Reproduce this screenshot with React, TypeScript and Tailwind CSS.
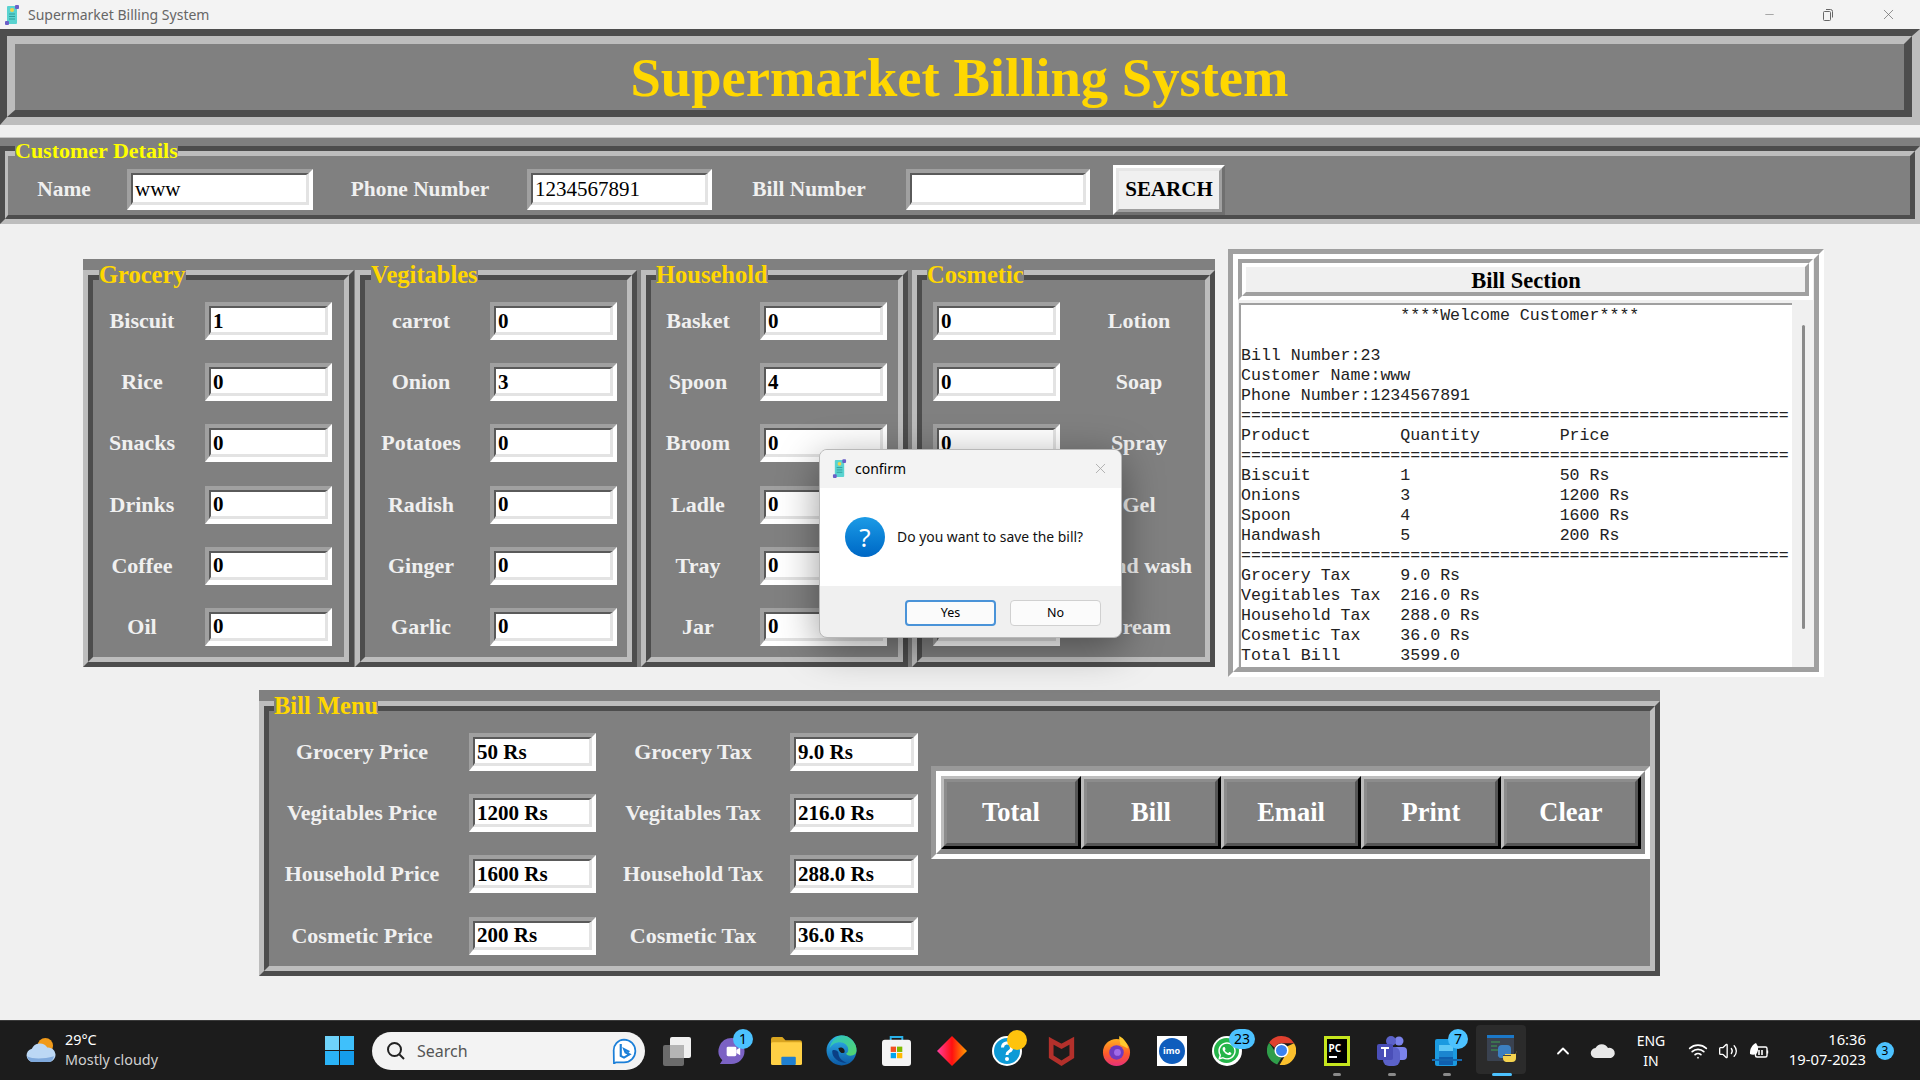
import React from "react";
import { ChevronUp, Wifi, Volume2, X, Minus } from "lucide-react";
import { FaWhatsapp } from "react-icons/fa";

const serif = "font-['Liberation_Serif',serif]";
const ui = "font-['Noto_Sans',sans-serif]";

const Sunken = ({ w, h, value, bold = true }: { w: string; h: string; value?: string; bold?: boolean }) => (
  <div className={`${w} ${h} shrink-0 border-t-[4px] border-l-[4px] border-b-[5px] border-r-[4px] border-t-[#a0a0a0] border-l-[#a0a0a0] border-b-white border-r-white`}>
    <div className={`h-full border-t-[2px] border-l-[2px] border-b-[3px] border-r-[3px] border-t-[#5a5a5a] border-l-[#5a5a5a] border-b-[#e3e3e3] border-r-[#e3e3e3] bg-white flex items-center pt-[2px] text-black text-[21px] leading-none ${serif} ${bold ? "pl-[2px] font-bold" : "pl-[2px] font-normal"}`}>
      {value}
    </div>
  </div>
);

const LabelText = ({ className, children }: { className: string; children: React.ReactNode }) => (
  <div className={`${className} shrink-0 text-center whitespace-nowrap leading-none font-bold text-[#f0f0f0] ${serif}`}>{children}</div>
);

type Col = { title: string; titleLeft: string; outer: string; items: [string, string][]; labelW: string; gap: string };

const RidgeTitle = ({ left, children }: { left: string; children: React.ReactNode }) => (
  <div className={`absolute ${left} top-[2px] bg-[#808080] text-[#ffd700] text-[24.5px] leading-[28px] font-bold whitespace-nowrap ${serif}`}>{children}</div>
);

const Ridge = ({ className, children }: { className: string; children: React.ReactNode }) => (
  <div className={`${className} border-[5px] border-t-[#bdbdbd] border-l-[#bdbdbd] border-b-[#4d4d4d] border-r-[#4d4d4d]`}>
    <div className="h-full border-[5px] border-t-[#4d4d4d] border-l-[#4d4d4d] border-b-[#bdbdbd] border-r-[#bdbdbd]">{children}</div>
  </div>
);

const columns: Col[] = [
  { title: "Grocery", titleLeft: "left-[16px]", outer: "w-[271px]", labelW: "w-[98px]", gap: "ml-[14px]", items: [["Biscuit", "1"], ["Rice", "0"], ["Snacks", "0"], ["Drinks", "0"], ["Coffee", "0"], ["Oil", "0"]] },
  { title: "Vegitables", titleLeft: "left-[16px]", outer: "w-[282px] ml-[1px]", labelW: "w-[112px]", gap: "ml-[13px]", items: [["carrot", "0"], ["Onion", "3"], ["Potatoes", "0"], ["Radish", "0"], ["Ginger", "0"], ["Garlic", "0"]] },
  { title: "Household", titleLeft: "left-[15px]", outer: "w-[267px] ml-[4px]", labelW: "w-[94px]", gap: "ml-[15px]", items: [["Basket", "0"], ["Spoon", "4"], ["Broom", "0"], ["Ladle", "0"], ["Tray", "0"], ["Jar", "0"]] },
];
const cosmetic: [string, string][] = [["Lotion", "0"], ["Soap", "0"], ["Spray", "0"], ["Gel", "0"], ["Hand wash", "5"], ["Cream", "0"]];

const billLines = [
  "                ****Welcome Customer****",
  " ",
  "Bill Number:23",
  "Customer Name:www",
  "Phone Number:1234567891",
  "=======================================================",
  "Product         Quantity        Price",
  "=======================================================",
  "Biscuit         1               50 Rs",
  "Onions          3               1200 Rs",
  "Spoon           4               1600 Rs",
  "Handwash        5               200 Rs",
  "=======================================================",
  "Grocery Tax     9.0 Rs",
  "Vegitables Tax  216.0 Rs",
  "Household Tax   288.0 Rs",
  "Cosmetic Tax    36.0 Rs",
  "Total Bill      3599.0",
];

const menuRows = [
  ["Grocery Price", "50 Rs", "Grocery Tax", "9.0 Rs"],
  ["Vegitables Price", "1200 Rs", "Vegitables Tax", "216.0 Rs"],
  ["Household Price", "1600 Rs", "Household Tax", "288.0 Rs"],
  ["Cosmetic Price", "200 Rs", "Cosmetic Tax", "36.0 Rs"],
];

const ScrollIcon = ({ className }: { className: string }) => (
  <svg viewBox="0 0 16 20" className={className}>
    <rect x="3" y="1" width="10" height="18" rx="1" fill="#5ad3d0" />
    <rect x="11" y="0" width="4" height="4" rx="1" fill="#6b5fc7" />
    <rect x="1" y="16" width="4" height="4" rx="1" fill="#6b5fc7" />
    <circle cx="8" cy="5" r="2" fill="#f2d14b" />
    <path d="M5 9h6M5 11.5h6M5 14h6" stroke="#2f9e9b" strokeWidth="1" />
  </svg>
);

const Badge = ({ children, className }: { children?: React.ReactNode; className: string }) => (
  <div className={`absolute flex items-center justify-center rounded-full text-[14px] leading-none text-black ${ui} ${className}`}>{children}</div>
);

const Dash = ({ blue = false }: { blue?: boolean }) => (
  <div className={`absolute bottom-[5px] left-1/2 -translate-x-1/2 h-[3px] rounded-full ${blue ? "w-[20px] bg-[#4cc2ff]" : "w-[8px] bg-[#8a8a8a]"}`} />
);

const Slot = ({ children }: { children: React.ReactNode }) => (
  <div className="relative w-[55px] h-[60px] shrink-0 flex items-center justify-center">{children}</div>
);

export default function App() {
  return (
    <div className="relative w-[1920px] h-[1080px] overflow-hidden bg-[#f0f0f0] flex flex-col">
      {/* window title bar */}
      <div className="h-[29px] shrink-0 bg-[#f3f3f3] flex items-center pl-[4px]">
        <ScrollIcon className="w-[16px] h-[20px]" />
        <div className={`ml-[8px] text-[14px] text-[#666666] ${ui}`}>Supermarket Billing System</div>
        <div className="ml-auto flex items-center text-[#666666]">
          <Minus className="w-[13px] h-[13px] mr-[46px]" strokeWidth={1} />
          <svg viewBox="0 0 12 14" className="w-[12px] h-[14px] mr-[46px]" fill="none" stroke="#666666" strokeWidth="1">
            <rect x="1.5" y="3.5" width="7" height="9" rx="1" />
            <path d="M4 1.5h4.5a2 2 0 0 1 2 2v6" />
          </svg>
          <X className="w-[17px] h-[17px] mr-[23px]" strokeWidth={1} />
        </div>
      </div>

      {/* heading */}
      <div className="h-[96px] shrink-0 border-t-[7px] border-l-[7px] border-b-[8px] border-r-[8px] border-t-[#4d4d4d] border-l-[#4d4d4d] border-b-[#bdbdbd] border-r-[#bdbdbd]">
        <div className="h-full bg-[#808080] border-t-[8px] border-l-[8px] border-b-[7px] border-r-[8px] border-t-[#bdbdbd] border-l-[#bdbdbd] border-b-[#4d4d4d] border-r-[#4d4d4d] flex items-center justify-center pt-[2px]">
          <div className={`text-[54.6px] leading-none font-bold text-[#ffd700] whitespace-nowrap ${serif}`}>Supermarket Billing System</div>
        </div>
      </div>

      {/* customer details */}
      <div className="relative mt-[12px] h-[87px] shrink-0 bg-[#808080] border-t border-[#c4c4c4] pt-[8px]">
        <div className="h-[78px] border-[5px] border-b-[5px] border-t-[#4d4d4d] border-l-[#4d4d4d] border-b-[#bdbdbd] border-r-[#bdbdbd]">
          <div className="h-full border-t-[5px] border-l-[3px] border-b-[4px] border-r-[5px] border-t-[#bdbdbd] border-l-[#bdbdbd] border-b-[#4d4d4d] border-r-[#4d4d4d] flex items-center pt-[8px] text-[21.4px]">
            <LabelText className="w-[112px]">Name</LabelText>
            <div className="ml-[7px]"><Sunken w="w-[186px]" h="h-[41px]" value="www" bold={false} /></div>
            <LabelText className="w-[214px]">Phone Number</LabelText>
            <Sunken w="w-[185px]" h="h-[41px]" value="1234567891" bold={false} />
            <LabelText className="w-[194px]">Bill Number</LabelText>
            <Sunken w="w-[184px]" h="h-[41px]" />
            <button className={`ml-[23px] w-[112px] h-[50px] shrink-0 border-[3px] border-t-white border-l-white border-b-[#6f6f6f] border-r-[#6f6f6f] text-[21px] leading-none font-bold text-black ${serif}`}>
              <span className="flex h-full items-center justify-center border-[3px] border-t-[#e6e6e6] border-l-[#e6e6e6] border-b-[#a0a0a0] border-r-[#a0a0a0] bg-[#f0f0f0]">SEARCH</span>
            </button>
          </div>
        </div>
        <div className={`absolute left-[15px] top-[0px] bg-[#808080] text-[#ffff00] text-[22px] leading-[26px] font-bold whitespace-nowrap ${serif}`}>Customer Details</div>
      </div>

      {/* products + bill */}
      <div className="mt-[25px] flex items-start pl-[83px] shrink-0">
        <div className="mt-[10px] w-[1132px] h-[408px] shrink-0 bg-[#808080] flex">
          {columns.map((c) => (
            <div key={c.title} className={`relative ${c.outer} shrink-0 pt-[11px]`}>
              <Ridge className="h-full">
                <div className="flex flex-col gap-[23.2px] pt-[22px] text-[22px]">
                  {c.items.map(([l, v]) => (
                    <div key={l} className="flex items-center">
                      <LabelText className={c.labelW}>{l}</LabelText>
                      <div className={c.gap}><Sunken w="w-[127px]" h="h-[38px]" value={v} /></div>
                    </div>
                  ))}
                </div>
              </Ridge>
              <RidgeTitle left={c.titleLeft}>{c.title}</RidgeTitle>
            </div>
          ))}
          <div className="relative w-[303px] ml-[4px] shrink-0 pt-[11px]">
            <Ridge className="h-full">
              <div className="flex flex-col gap-[23.2px] pt-[22px] text-[22px]">
                {cosmetic.map(([l, v]) => (
                  <div key={l} className="flex items-center">
                    <div className="ml-[11px]"><Sunken w="w-[127px]" h="h-[38px]" value={v} /></div>
                    <LabelText className="ml-[8px] w-[142px]">{l}</LabelText>
                  </div>
                ))}
              </div>
            </Ridge>
            <RidgeTitle left="left-[15px]">Cosmetic</RidgeTitle>
          </div>
        </div>

        {/* bill section */}
        <div className="ml-[13px] w-[596px] h-[428px] shrink-0 border-[5px] border-t-[#a0a0a0] border-l-[#a0a0a0] border-b-white border-r-white">
          <div className="h-full border-[5px] border-t-white border-l-white border-b-[#a0a0a0] border-r-[#a0a0a0] flex flex-col">
            <div className="h-[41px] w-[575px] shrink-0 border-[4px] border-t-[#a0a0a0] border-l-[#a0a0a0] border-b-white border-r-white">
              <div className={`h-full border-[4px] border-t-white border-l-white border-b-[#a0a0a0] border-r-[#a0a0a0] bg-[#f0f0f0] flex items-center justify-center pt-[3px] pl-[1px] text-[22.5px] leading-none font-bold text-black ${serif}`}>Bill Section</div>
            </div>
            <div className="mt-[3px] flex-1 min-h-0 flex pl-[1px]">
              <div className="w-[553px] h-full overflow-hidden bg-white border-t-2 border-l-2 border-[#a0a0a0] pt-[1px] font-['Liberation_Mono',monospace] text-[16.6px] leading-[20px] text-[#222222]">
                {billLines.map((l, i) => (
                  <div key={i} className="whitespace-pre h-[20px]">{l}</div>
                ))}
              </div>
              <div className="flex-1 relative bg-[#f0f0f0]">
                <div className="absolute left-[10px] top-[22px] w-[3px] h-[304px] rounded-full bg-[#8a8a8a]" />
              </div>
            </div>
          </div>
        </div>
      </div>

      {/* bill menu */}
      <div className="relative mt-[13px] ml-[259px] w-[1401px] h-[286px] shrink-0 bg-[#808080] pt-[11px]">
        <Ridge className="h-full">
          <div className="flex items-start">
            <div className="flex flex-col gap-[23.2px] pt-[22px] text-[22px]">
              {menuRows.map((r) => (
                <div key={r[0]} className="flex items-center">
                  <LabelText className="w-[186px]">{r[0]}</LabelText>
                  <div className="ml-[14px]"><Sunken w="w-[127px]" h="h-[38px]" value={r[1]} /></div>
                  <LabelText className="w-[194px]">{r[2]}</LabelText>
                  <Sunken w="w-[128px]" h="h-[38px]" value={r[3]} />
                </div>
              ))}
            </div>
            <div className="ml-[13px] mt-[55px] w-[719px] h-[93px] shrink-0 border-[5px] border-t-[#999999] border-l-[#999999] border-b-white border-r-white">
              <div className="h-full border-[5px] border-t-white border-l-white border-b-[#8a8a8a] border-r-[#8a8a8a] flex">
                {["Total", "Bill", "Email", "Print", "Clear"].map((b) => (
                  <button key={b} className={`w-[140px] h-full shrink-0 border-[3px] border-t-[#bdbdbd] border-l-[#bdbdbd] border-b-black border-r-black text-[26.5px] leading-none font-bold text-white ${serif}`}>
                    <span className="flex h-full items-center justify-center border-[3px] border-t-[#8c8c8c] border-l-[#8c8c8c] border-b-[#555555] border-r-[#555555] bg-[#808080]">{b}</span>
                  </button>
                ))}
              </div>
            </div>
          </div>
        </Ridge>
        <RidgeTitle left="left-[15px]">Bill Menu</RidgeTitle>
      </div>

      {/* taskbar */}
      <div className={`mt-auto h-[60px] shrink-0 bg-[#1c1c1c] border-t border-[#3a3a3a] flex items-center text-white ${ui}`}>
        <div className="w-[325px] shrink-0 pl-[25px] flex items-center">
          <svg viewBox="0 0 32 28" className="w-[31px] h-[27px]">
            <circle cx="21" cy="9" r="8" fill="#f09a1a" />
            <path d="M8 26a7 7 0 0 1-1-13.8A9 9 0 0 1 23 11a6.5 6.5 0 0 1 2 15z" fill="#bcd8f5" />
            <path d="M2 20c6 3 17 3 28 0-1 4-3 6-5 6H8c-3 0-5-3-6-6z" fill="#7fa9dc" />
          </svg>
          <div className="ml-[9px] pb-[2px] text-[14.4px] leading-[20px]">
            <div>29°C</div>
            <div className="text-[#d0d0d0]">Mostly cloudy</div>
          </div>
        </div>
        <svg viewBox="0 0 29 29" className="w-[29px] h-[29px] shrink-0">
          <rect x="0" y="0" width="14" height="14" fill="#6fd3fa" />
          <rect x="15" y="0" width="14" height="14" fill="#3fc0fb" />
          <rect x="0" y="15" width="14" height="14" fill="#2bb4f7" />
          <rect x="15" y="15" width="14" height="14" fill="#159dec" />
        </svg>
        <div className="ml-[18px] w-[273px] h-[38px] shrink-0 rounded-full bg-[#f3f3f3] flex items-center pl-[14px] pr-[8px] text-[#555555]">
          <svg viewBox="0 0 20 20" className="w-[20px] h-[20px]" fill="none" stroke="#222222" strokeWidth="2">
            <circle cx="8.5" cy="8.5" r="6.5" />
            <path d="M13.5 13.5 L18 18" />
          </svg>
          <div className="ml-[11px] text-[16px]">Search</div>
          <svg viewBox="0 0 24 24" className="ml-auto w-[26px] h-[26px]">
            <path d="M12 1.5a10.5 10.5 0 0 1 0 21H4.5l-1.8 1.2L2.5 12A9.8 9.8 0 0 1 12 1.5z" fill="white" stroke="#1b7fd8" strokeWidth="1.6" />
            <path d="M9 5.5v11l3 1.6 5-3-3.6-1.7-1.2-3 4.8 2.4" fill="none" stroke="#1b7fd8" strokeWidth="2" />
          </svg>
        </div>
        <div className="ml-[4px] flex shrink-0">
          <Slot>
            <svg viewBox="0 0 30 30" className="w-[30px] h-[30px]">
              <rect x="1" y="9" width="21" height="21" rx="2" fill="#6b6b6b" />
              <rect x="8" y="1" width="21" height="21" rx="2" fill="#f0f0f0" />
              <rect x="8" y="9" width="14" height="13" fill="#b5b5b5" />
            </svg>
          </Slot>
          <Slot>
            <svg viewBox="0 0 30 30" className="w-[29px] h-[29px]">
              <path d="M15 2a13.5 13.5 0 0 1 0 27H3l2.5-4A13.5 13.5 0 0 1 15 2z" fill="#7b62c4" />
              <rect x="10" y="11" width="10" height="10" rx="1.5" fill="white" />
              <path d="M20 14.5l4-2.5v8l-4-2.5z" fill="white" />
            </svg>
            <Badge className="left-[29px] top-[8px] w-[20px] h-[20px] bg-[#4cc2ff]">1</Badge>
          </Slot>
          <Slot>
            <svg viewBox="0 0 30 28" className="w-[31px] h-[29px]">
              <path d="M0 3a2 2 0 0 1 2-2h9l3 3h14a2 2 0 0 1 2 2v3H0z" fill="#d9a520" />
              <rect x="0" y="6" width="30" height="22" rx="1.5" fill="#ffd045" />
              <rect x="10" y="20" width="14" height="8" rx="1" fill="#1f7fd0" />
            </svg>
          </Slot>
          <Slot>
            <svg viewBox="0 0 30 30" className="w-[31px] h-[31px]">
              <defs>
                <linearGradient id="edgeA" x1="0" y1="0" x2="0" y2="1"><stop offset="0" stopColor="#2fb5ee" /><stop offset="1" stopColor="#0c59a4" /></linearGradient>
                <linearGradient id="edgeB" x1="0" y1="0" x2="1" y2="1"><stop offset="0" stopColor="#2bc3c8" /><stop offset="1" stopColor="#55d66a" /></linearGradient>
              </defs>
              <circle cx="15" cy="15" r="14.5" fill="url(#edgeA)" />
              <path d="M15 .5A14.5 14.5 0 0 1 29.5 15c0 3-2 5-6 5-2 0-4-1-4-2 2-1 2-3 2-4 0-4-4-7-8-7-4 0-8 2-10 6C5 6 10 .5 15 .5z" fill="url(#edgeB)" />
              <path d="M12 12.5c3-1.500 6.500.5 6 4-.5 1.500-5 2-6-4z" fill="#1c1c1c" />
              <path d="M6 16c0 6 6 11 14 11-5-2-8-5-8-10 0-2-6-4-6-1z" fill="#0a3f85" />
            </svg>
          </Slot>
          <Slot>
            <svg viewBox="0 0 30 32" className="w-[29px] h-[31px]">
              <path d="M9 6V2h12v4" fill="none" stroke="#28b0e8" strokeWidth="2" />
              <rect x="0" y="5" width="30" height="27" rx="3" fill="#f4f4f4" />
              <rect x="9" y="12" width="5.5" height="5.500" fill="#f25022" />
              <rect x="15.5" y="12" width="5.5" height="5.5" fill="#7fba00" />
              <rect x="9" y="18.5" width="5.5" height="5.5" fill="#00a4ef" />
              <rect x="15.5" y="18.5" width="5.5" height="5.5" fill="#ffb900" />
            </svg>
          </Slot>
          <Slot>
            <svg viewBox="0 0 30 30" className="w-[30px] h-[30px]">
              <defs><linearGradient id="dia" x1="0" y1="0" x2="1" y2="0"><stop offset="0" stopColor="#ff3fa0" /><stop offset="0.5" stopColor="#ff1010" /><stop offset="1" stopColor="#ffa000" /></linearGradient></defs>
              <path d="M15 0 L30 15 L15 30 L0 15 Z" fill="url(#dia)" />
            </svg>
          </Slot>
          <Slot>
            <svg viewBox="0 0 30 30" className="w-[30px] h-[30px]">
              <circle cx="15" cy="15" r="14" fill="#0d9ad6" stroke="white" strokeWidth="2" />
              <path d="M10.5 11.5a4.5 4.5 0 1 1 6.5 4c-1.500.8-2 1.500-2 3.500" fill="none" stroke="white" strokeWidth="3" />
              <circle cx="15" cy="23" r="2" fill="white" />
            </svg>
            <Badge className="left-[28px] top-[9px] w-[20px] h-[20px] bg-[#ffc30d]" />
          </Slot>
          <Slot>
            <svg viewBox="0 0 28 32" className="w-[27px] h-[30px]">
              <path d="M3 5 L14 11 L25 5 V22 L14 29 L3 22 Z" fill="#1c1c1c" stroke="#b3302b" strokeWidth="5" strokeLinejoin="miter" />
            </svg>
          </Slot>
          <Slot>
            <svg viewBox="0 0 30 32" className="w-[29px] h-[31px]">
              <defs><linearGradient id="ff" x1="0" y1="0" x2="0" y2="1"><stop offset="0" stopColor="#ffb020" /><stop offset="0.55" stopColor="#ff5a2a" /><stop offset="1" stopColor="#e6307a" /></linearGradient></defs>
              <circle cx="15" cy="18" r="14" fill="url(#ff)" />
              <path d="M18 1c5 3 8 7 9 13l-8-4c0-3-2-6-1-9z" fill="#ffc92e" />
              <circle cx="15" cy="18" r="7.5" fill="#6f3ac0" />
              <circle cx="16" cy="18" r="3.5" fill="#a06ae8" />
            </svg>
          </Slot>
          <Slot>
            <div className="w-[30px] h-[30px] bg-white flex items-center justify-center">
              <div className="w-[26px] h-[26px] rounded-full bg-[#0f5dbd] flex items-center justify-center text-[9px] leading-none font-bold text-white">imo</div>
            </div>
          </Slot>
          <Slot>
            <div className="w-[30px] h-[30px] rounded-full bg-white flex items-center justify-center">
              <div className="w-[25px] h-[25px] rounded-full bg-[#25b54a] flex items-center justify-center">
                <FaWhatsapp className="w-[20px] h-[20px] text-white" />
              </div>
            </div>
            <Badge className="left-[30px] top-[8px] w-[26px] h-[20px] bg-[#4cc2ff]">23</Badge>
          </Slot>
          <Slot>
            <svg viewBox="0 0 30 30" className="w-[29px] h-[29px]">
              <path d="M15 0a15 15 0 0 1 13 7.500H15a7.500 7.500 0 0 0-7 4.700L2.200 7A15 15 0 0 1 15 0z" fill="#e0402f" />
              <path d="M2.200 7 L9 17a7.500 7.500 0 0 0 6 5.500L10.500 29.400A15 15 0 0 1 2.200 7z" fill="#2f9e4a" />
              <path d="M28 7.500A15 15 0 0 1 13 30l6.500-11a7.500 7.500 0 0 0 .5-8z" fill="#fbc02d" />
              <circle cx="15" cy="15" r="6.5" fill="#3b82f0" stroke="white" strokeWidth="1.6" />
            </svg>
          </Slot>
          <Slot>
            <div className="w-[26px] h-[30px] border-[3px] border-[#c6e61e] bg-black flex flex-col justify-center pl-[2px] text-white">
              <div className="text-[10px] leading-[11px] font-bold">PC</div>
              <div className="w-[8px] h-[2px] mt-[2px] bg-white" />
            </div>
            <Dash />
          </Slot>
          <Slot>
            <svg viewBox="0 0 30 30" className="w-[30px] h-[30px]">
              <circle cx="22" cy="5" r="4.500" fill="#7b83eb" />
              <rect x="15" y="11" width="15" height="13" rx="4" fill="#7b83eb" />
              <circle cx="14" cy="5" r="5" fill="#5b62c9" />
              <rect x="6" y="11" width="17" height="19" rx="6" fill="#5b62c9" />
              <rect x="0" y="8" width="16" height="16" rx="2" fill="#4a4fb8" />
              <path d="M4 12h8M8 12v9" stroke="white" strokeWidth="2" />
            </svg>
            <Dash />
          </Slot>
          <Slot>
            <svg viewBox="0 0 30 30" className="w-[30px] h-[30px]">
              <rect x="3" y="3" width="22" height="27" rx="2" fill="#1b9ae0" />
              <rect x="7" y="9" width="14" height="6" fill="#5ec7f5" />
              <rect x="7" y="15" width="14" height="6" fill="#1b86d0" />
              <rect x="7" y="21" width="14" height="8" fill="#0f5fae" />
              <rect x="0" y="23" width="30" height="2" fill="#1568b0" />
            </svg>
            <Badge className="left-[29px] top-[8px] w-[20px] h-[20px] bg-[#4cc2ff]">7</Badge>
            <Dash />
          </Slot>
          <Slot>
            <div className="absolute left-[2px] top-[4px] w-[50px] h-[49px] rounded-[4px] bg-[#2b2b2b]" />
            <svg viewBox="0 0 30 34" className="relative w-[30px] h-[34px]">
              <rect x="0" y="1" width="27" height="26" rx="1" fill="#3a4250" />
              <rect x="0" y="1" width="27" height="3" fill="#1b78c8" />
              <path d="M4 8h9M4 12h6M4 16h8" stroke="#3fa050" strokeWidth="1" />
              <path d="M11 20v-5a4 4 0 0 1 4-4h5a4 4 0 0 1 4 4v6h-8v1h7v2h-9a3 3 0 0 1-3-4z" fill="#3c7fc0" />
              <path d="M29 17v7a4 4 0 0 1-4 4h-6a4 4 0 0 1-3-4v-2h8v-1h-6v-1h9a2 2 0 0 0 2-3z" fill="#f5d34f" />
            </svg>
            <Dash blue />
          </Slot>
        </div>
        <ChevronUp className="ml-[24px] w-[20px] h-[20px] shrink-0" strokeWidth={2.2} />
        <svg viewBox="0 0 26 16" className="ml-[17px] w-[26px] h-[16px] shrink-0">
          <path d="M6 15a5 5 0 0 1-.5-10A7 7 0 0 1 18 5a5 5 0 0 1 3 10z" fill="#e8e8e8" />
        </svg>
        <div className="ml-[15px] w-[40px] shrink-0 text-center text-[14px] leading-[20px]">
          <div>ENG</div>
          <div>IN</div>
        </div>
        <Wifi className="ml-[17px] w-[20px] h-[20px] shrink-0" strokeWidth={2} />
        <Volume2 className="ml-[10px] w-[20px] h-[20px] shrink-0" strokeWidth={1.6} />
        <svg viewBox="0 0 20 20" className="ml-[11px] w-[20px] h-[20px] shrink-0" fill="none" stroke="white" strokeWidth="1.4">
          <rect x="6.500" y="6" width="11.500" height="10" rx="1.5" />
          <path d="M18.500 9.500v3" />
          <path d="M1 13c-.5-5 2-9 6-11 2 3 3 6 1 10-1 2-5 2-7 1z" fill="white" stroke="none" />
          <path d="M10 9v5M13 9v5" strokeWidth="1.6" />
        </svg>
        <div className="ml-[7px] w-[90px] pb-[3px] shrink-0 text-right text-[14.8px] leading-[20px]">
          <div>16:36</div>
          <div>19-07-2023</div>
        </div>
        <div className="ml-[10px] w-[18px] h-[18px] shrink-0 rounded-full bg-[#4cc2ff] flex items-center justify-center text-[12px] leading-none text-black">3</div>
      </div>

      {/* confirm dialog */}
      <div className={`absolute left-[819px] top-[449px] w-[303px] h-[189px] rounded-[8px] overflow-hidden border border-[#b8b8b8] bg-[#f0f0f0] shadow-[0_10px_40px_rgba(0,0,0,0.4)] flex flex-col ${ui}`}>
        <div className="h-[38px] shrink-0 bg-[#f3f3f3] flex items-center pl-[12px] pr-[12px] pb-[1px]">
          <ScrollIcon className="w-[15px] h-[19px]" />
          <div className="ml-[8px] text-[14px] text-black">confirm</div>
          <X className="ml-auto w-[17px] h-[17px] text-[#a8a8a8]" strokeWidth={1.2} />
        </div>
        <div className="h-[98px] shrink-0 bg-white flex items-center pl-[25px]">
          <div className="w-[40px] h-[40px] shrink-0 rounded-full bg-gradient-to-b from-[#1c9be6] to-[#0067c5] flex items-center justify-center text-white text-[26px] leading-none">?</div>
          <div className="ml-[12px] text-[13.9px] whitespace-nowrap text-[#111111]">Do you want to save the bill?</div>
        </div>
        <div className="flex-1 flex items-start pt-[14px] pl-[85px] gap-[14px]">
          <button className="w-[91px] h-[26px] rounded-[4px] bg-[#fbfbfb] border-2 border-[#4a93d8] text-[12.5px] leading-none text-black">Yes</button>
          <button className="w-[91px] h-[26px] rounded-[4px] bg-[#fbfbfb] border border-[#d0d0d0] text-[12.5px] leading-none text-black">No</button>
        </div>
      </div>
    </div>
  );
}
